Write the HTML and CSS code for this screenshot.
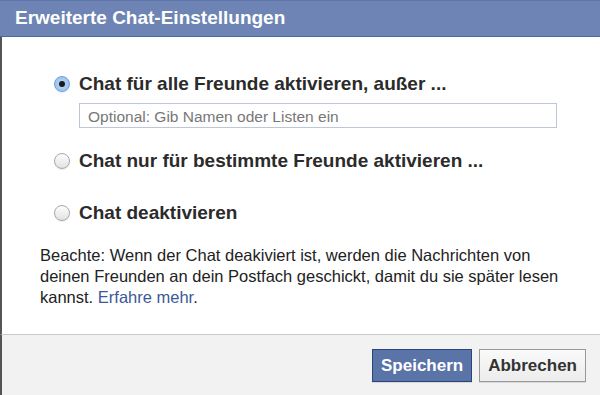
FILE: index.html
```html
<!DOCTYPE html>
<html lang="de">
<head>
  <meta charset="UTF-8">
  <title>Erweiterte Chat-Einstellungen</title>
  <link rel="stylesheet" href="styles.css">
</head>
<body>
  <div class="dialog">
    <div class="dialog-header">Erweiterte Chat-Einstellungen</div>
    <div class="dialog-body">
      <label class="option">
        <span class="radio checked"></span>
        <span class="option-label">Chat für alle Freunde aktivieren, außer ...</span>
      </label>
      <div class="field">
        <input type="text" class="names" placeholder="Optional: Gib Namen oder Listen ein">
      </div>
      <label class="option">
        <span class="radio"></span>
        <span class="option-label">Chat nur für bestimmte Freunde aktivieren ...</span>
      </label>
      <label class="option">
        <span class="radio"></span>
        <span class="option-label">Chat deaktivieren</span>
      </label>
      <p class="note">Beachte: Wenn der Chat deakiviert ist, werden die Nachrichten von deinen Freunden an dein Postfach geschickt, damit du sie später lesen kannst. <a href="#">Erfahre mehr</a>.</p>
    </div>
    <div class="dialog-footer">
      <button class="btn btn-primary">Speichern</button>
      <button class="btn">Abbrechen</button>
    </div>
  </div>
</body>
</html>
```

FILE: styles.css
```css
body {
  margin: 0;
  padding: 0;
  font-family: "Liberation Sans", Arial, sans-serif;
  background-color: #fff;
  color: #333;
}

.dialog {
  width: 600px;
  height: 395px;
  display: flex;
  flex-direction: column;
  overflow: hidden;
}

.dialog-header {
  height: 37px;
  flex-shrink: 0;
  box-sizing: border-box;
  padding: 6px 0 0 15px;
  background-color: #6d84b4;
  border-top: 1px solid #5c74a8;
  border-bottom: 1px solid #4e67a0;
  color: #fff;
  font-size: 19px;
  font-weight: bold;
}

.dialog-body {
  flex: 1;
  border-left: 2px solid #555;
  padding: 34px 0 0 50px;
}

.option {
  display: flex;
  align-items: center;
  height: 26px;
  margin-left: 2px;
}

.option + .option {
  margin-top: 26px;
}

.field + .option {
  margin-top: 20px;
}

.radio {
  width: 16px;
  height: 16px;
  flex-shrink: 0;
  box-sizing: border-box;
  border-radius: 50%;
  border: 1px solid #a8a8a8;
  background: linear-gradient(#fdfdfd, #e2e2e2);
  box-shadow: 0 1px 1px rgba(0, 0, 0, 0.08);
  margin-right: 9px;
  position: relative;
}

.radio.checked {
  border-color: #6f9fd9;
  background: radial-gradient(circle, #bcd8f6 0, #8fbcef 100%);
}

.radio.checked::after {
  content: "";
  position: absolute;
  left: 4px;
  top: 4px;
  width: 6px;
  height: 6px;
  border-radius: 50%;
  background-color: #1a1a1a;
}

.option-label {
  font-size: 19px;
  font-weight: bold;
  color: #2b2b2b;
}

.field {
  padding: 6px 0 0 27px;
}

.names {
  width: 478px;
  height: 25px;
  box-sizing: border-box;
  border: 1px solid #bdc7d8;
  padding: 2px 8px 0;
  font-family: "Liberation Sans", Arial, sans-serif;
  font-size: 15.5px;
  color: #333;
}

.names::placeholder {
  color: #777;
}

.note {
  margin: 19px 0 0 -12px;
  width: 535px;
  font-size: 16.5px;
  line-height: 21px;
  color: #222;
}

.note a {
  color: #3b5998;
  text-decoration: none;
}

.dialog-footer {
  height: 61px;
  flex-shrink: 0;
  box-sizing: border-box;
  background-color: #f2f2f2;
  border-top: 1px solid #c9c9c9;
  border-left: 2px solid #555;
  display: flex;
  justify-content: flex-end;
  align-items: flex-start;
  gap: 7px;
  padding: 14px 14px 0 0;
}

.btn {
  height: 33px;
  padding: 0 8px;
  font-family: "Liberation Sans", Arial, sans-serif;
  font-size: 17px;
  font-weight: bold;
  color: #333;
  background: linear-gradient(#fafafa, #ececec);
  border: 1px solid #999;
  border-radius: 0;
  box-shadow: 0 1px 0 rgba(0, 0, 0, 0.1);
}

.btn-primary {
  background: #5b74a8;
  border-color: #29447e;
  color: #fff;
}
```
